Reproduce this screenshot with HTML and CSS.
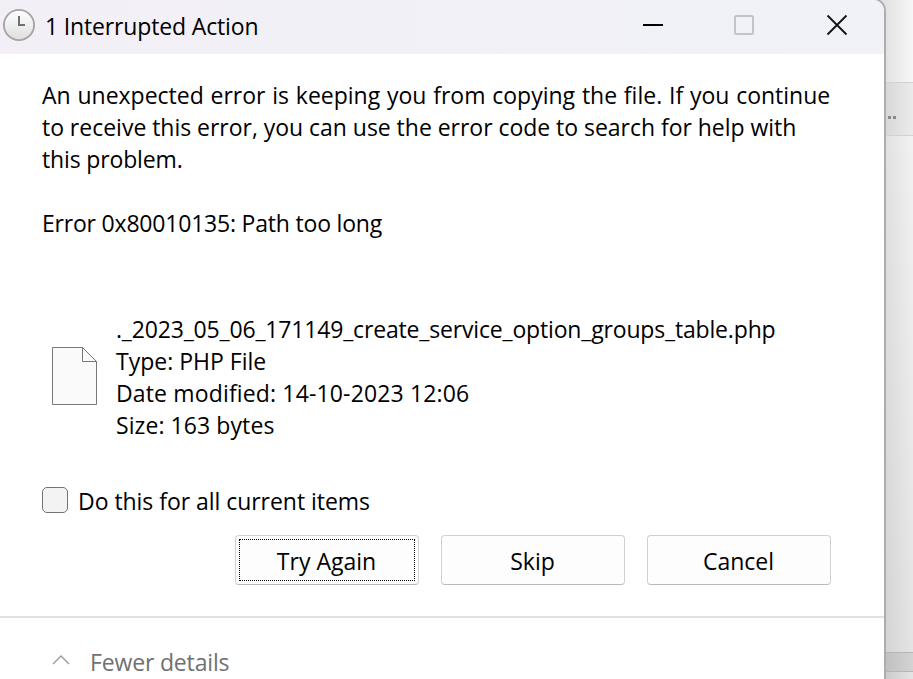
FILE: index.html
```html
<!DOCTYPE html>
<html lang="en">
<head>
<meta charset="utf-8">
<title>1 Interrupted Action</title>
<link rel="stylesheet" href="styles.css">
</head>
<body>
<div class="desktop">
<main class="dialog">
  <header class="titlebar">
    <svg class="clock" width="34" height="34" viewBox="0 0 34 34"><defs><linearGradient id="face" x1="0" y1="0" x2="0" y2="1"><stop offset="0" stop-color="#fff"/><stop offset="1" stop-color="#dedede"/></linearGradient></defs><circle cx="17" cy="17" r="15.1" fill="url(#face)" stroke="#a3a3a3" stroke-width="1.8"/><path d="M17 8v9h6" fill="none" stroke="#707070" stroke-width="2"/></svg>
    <h1 class="title">1 Interrupted Action</h1>
    <div class="controls">
      <svg width="22" height="22" viewBox="0 0 22 22"><path d="M1 11h20" stroke="#000" stroke-width="2"/></svg>
      <svg width="22" height="22" viewBox="0 0 22 22"><rect x="1" y="2" width="18" height="18" rx="1.5" fill="none" stroke="#c4c4c8" stroke-width="2"/></svg>
      <svg width="22" height="22" viewBox="0 0 22 22"><path d="M1.5 1.5l19 19M20.5 1.5l-19 19" stroke="#111" stroke-width="1.8"/></svg>
    </div>
  </header>
  <section class="content">
    <p class="message"><span class="m1">An unexpected error is keeping you from copying the file. If you continue</span><br><span class="m2">to receive this error, you can use the error code to search for help with</span><br><span class="m3">this problem.</span></p>
    <p class="code"><span class="m4">Error 0x80010135: Path too long</span></p>
    <div class="file">
      <svg class="page" width="45" height="58" viewBox="0 0 45 58"><path d="M.5.5h30l14 14v43H.5z" fill="#fafafa" stroke="#777"/><path d="M30.5.5v14h14" fill="none" stroke="#777"/></svg>
      <div class="info"><span class="f1">._2023_05_06_171149_create_service_option_groups_table.php</span><br><span class="f2">Type: PHP File</span><br><span class="f3">Date modified: 14-10-2023 12:06</span><br><span class="f4">Size: 163 bytes</span></div>
    </div>
    <label class="repeat"><input type="checkbox" class="check"><span class="c1">Do this for all current items</span></label>
    <div class="actions">
      <button class="button focused"><span>Try Again</span></button>
      <button class="button"><span>Skip</span></button>
      <button class="button"><span>Cancel</span></button>
    </div>
  </section>
  <footer class="details">
    <svg width="18" height="10" viewBox="0 0 18 10"><path d="M1 9l8-8 8 8" fill="none" stroke="#999" stroke-width="1.3"/></svg>
    <span class="d1">Fewer details</span>
  </footer>
</main>
<aside class="backdrop">
  <div class="strip top"></div>
  <div class="strip tab"><i></i><i></i><i></i></div>
  <div class="strip body"></div>
  <div class="strip bar"></div>
  <div class="strip end"></div>
</aside>
</div>
</body>
</html>
```
FILE: styles.css
```css
* { box-sizing: border-box; }
body { margin: 0; overflow: hidden; background: #d9d9d9; font: 23px/32px "Open Sans", "Noto Sans", sans-serif; color: #000; }
.desktop { display: flex; width: 913px; height: 679px; overflow: hidden; background: #e2e2e2; }
.dialog { width: 886px; height: 681px; margin-top: -2px; flex: none; background: #fff; border: solid #adadad; border-width: 2px 2px 0 0; border-top-right-radius: 13px; overflow: hidden; white-space: nowrap; }
.titlebar { height: 54px; display: flex; align-items: flex-start; padding: 8px 36px 0 2px; background: linear-gradient(90deg, #f4eff6, #f2f0f7 30%, #f0f2f8); }
.title { margin: 2px 0 0 9px; font: inherit; letter-spacing: -.15px; }
.controls { display: flex; gap: 70px; margin: 6px 0 0 auto; }
.content { height: 562px; padding: 25px 53px 0 42px; }
.message { margin: 0; }
.m1 { word-spacing: .8px; }
.m2 { word-spacing: -.15px; }
.m3 { letter-spacing: -.15px; }
.m4 { letter-spacing: -.2px; }
.f1 { letter-spacing: -.17px; }
.f3 { letter-spacing: .15px; }
.f4 { letter-spacing: .08px; }
.c1 { margin-top: -1px; letter-spacing: -.04px; }
.code { margin: 32px 0 0; }
.file { display: flex; margin-top: 74px; height: 128px; }
.page { margin: 34px 0 0 10px; flex: none; }
.info { margin-left: 19px; }
.repeat { display: flex; gap: 10px; margin-top: 45px; height: 32px; }
.check { appearance: none; width: 26px; height: 26px; margin: 1px 0 0; border: 1.5px solid #737373; border-radius: 5px; background: #f3f3f3; }
.actions { display: flex; justify-content: flex-end; gap: 22px; margin-top: 17px; }
.button { width: 184px; height: 50px; padding: 2px 1px 0 0; border: 1px solid #d0d0d0; border-bottom-color: #b9b9b9; border-radius: 4px; background: #fdfdfd; font: inherit; color: inherit; }
.focused { outline: 1px dotted #000; outline-offset: -5px; }
.details { display: flex; align-items: flex-start; gap: 20px; height: 63px; padding: 28px 0 0 52px; border-top: 2px solid #e1e1e1; color: #707070; }
.details svg { margin-top: 9px; }
.d1 { letter-spacing: -.16px; }
.backdrop { flex: 1; display: flex; flex-direction: column; }
.strip { flex: none; }
.top { height: 82px; background: linear-gradient(90deg, #e2e2e2, #f7f7f7); }
.tab { display: flex; gap: 2px; height: 54px; padding-top: 33px; border: solid #d2d2d2; border-width: 1px 0; background: linear-gradient(90deg, #d8d8d8, #ebebeb); }
.tab i { width: 3px; height: 3px; background: #898989; }
.tab i:first-child { width: 0; }
.body { height: 516px; background: linear-gradient(90deg, rgba(0, 0, 0, .07), transparent), linear-gradient(#f2f2f2, #e4e4e4); }
.bar { height: 20px; border: solid #b6b6b6; border-width: 1px 0; background: linear-gradient(90deg, #c1c1c1, #d3d3d3); }
.end { height: 7px; background: linear-gradient(90deg, #cbcbcb, #e5e5e5); }
```
